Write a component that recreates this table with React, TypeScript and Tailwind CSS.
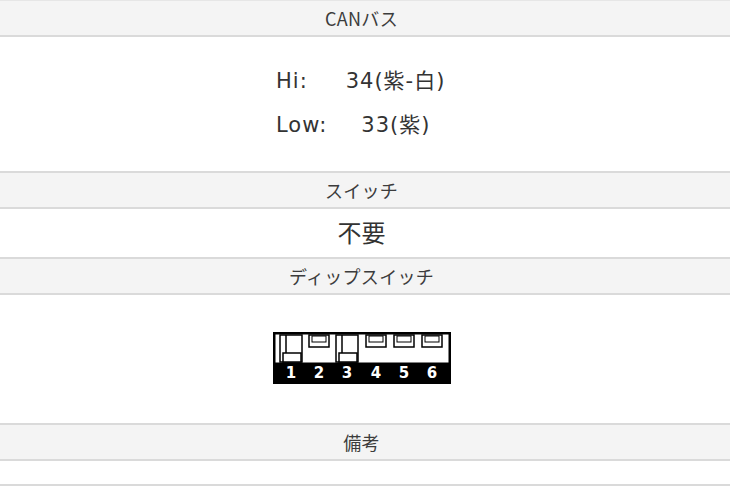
const jp = { fontFamily: '"Noto Sans CJK JP", "Noto Sans", sans-serif' };
const verdana = { fontFamily: '"DejaVu Sans", "Noto Sans CJK JP", sans-serif' };

function Head({ children }: { children: React.ReactNode }) {
  return (
    <div
      className="h-[36px] bg-[#f4f4f4] border-b-2 border-[#dadada] flex items-center justify-center pr-[7px] text-[18px] tracking-[0.3px] text-[#3c3c3c]"
      style={jp}
    >
      {children}
    </div>
  );
}

function DipSwitch() {
  const xs = [292, 320, 348, 377, 405, 433].map((x) => x - 274);
  const on = [true, false, true, false, false, false];
  return (
    <svg width="178" height="52" viewBox="0 0 178 52">
      <rect x="0" y="0" width="178" height="52" fill="#000" />
      <rect x="2.5" y="2.5" width="173" height="28" fill="#fff" />
      {xs.map((x, i) =>
        on[i] ? (
          <g key={i}>
            <rect x={x - 11} y="3" width="22" height="27" fill="none" stroke="#000" strokeWidth="1.5" />
            <line x1={x - 5} y1="3" x2={x - 5} y2="21" stroke="#000" strokeWidth="1.5" />
            <rect x={x - 8} y="21" width="18" height="9" fill="#fff" stroke="#000" strokeWidth="1.5" />
          </g>
        ) : (
          <g key={i}>
            <rect x={x - 10} y="3" width="20" height="12" fill="none" stroke="#000" strokeWidth="1.5" />
            <rect x={x - 7} y="4" width="14" height="6" fill="#fff" stroke="#000" strokeWidth="1" />
          </g>
        )
      )}
      {xs.map((x, i) => (
        <text
          key={i}
          x={x}
          y="46"
          textAnchor="middle"
          fill="#fff"
          fontSize="15"
          fontWeight="bold"
          fontFamily="DejaVu Sans, sans-serif"
        >
          {i + 1}
        </text>
      ))}
    </svg>
  );
}

export default function App() {
  return (
    <div className="w-[730px] h-[488px] bg-white overflow-hidden border-t border-[#e6e6e6]">
      <Head>CANバス</Head>
      <div className="h-[136px] border-b-2 border-[#dadada] pl-[276px] pt-[22px]">
        <div className="text-[21px] tracking-[1px] text-[#333] leading-[44px]" style={verdana}>
          <div>
            Hi:<span className="ml-[38px]">34(紫-白)</span>
          </div>
          <div>
            Low:<span className="ml-[34px]">33(紫)</span>
          </div>
        </div>
      </div>
      <Head>スイッチ</Head>
      <div
        className="h-[50px] border-b-2 border-[#dadada] flex items-center justify-center pr-[7px] pb-[2px] text-[24px] text-[#333]"
        style={jp}
      >
        不要
      </div>
      <Head>ディップスイッチ</Head>
      <div className="h-[130px] border-b-2 border-[#dadada] flex justify-center pt-[37px] pr-[7px]">
        <div className="h-fit">
          <DipSwitch />
        </div>
      </div>
      <Head>備考</Head>
      <div className="h-[25px] border-b-2 border-[#dadada]" />
    </div>
  );
}
